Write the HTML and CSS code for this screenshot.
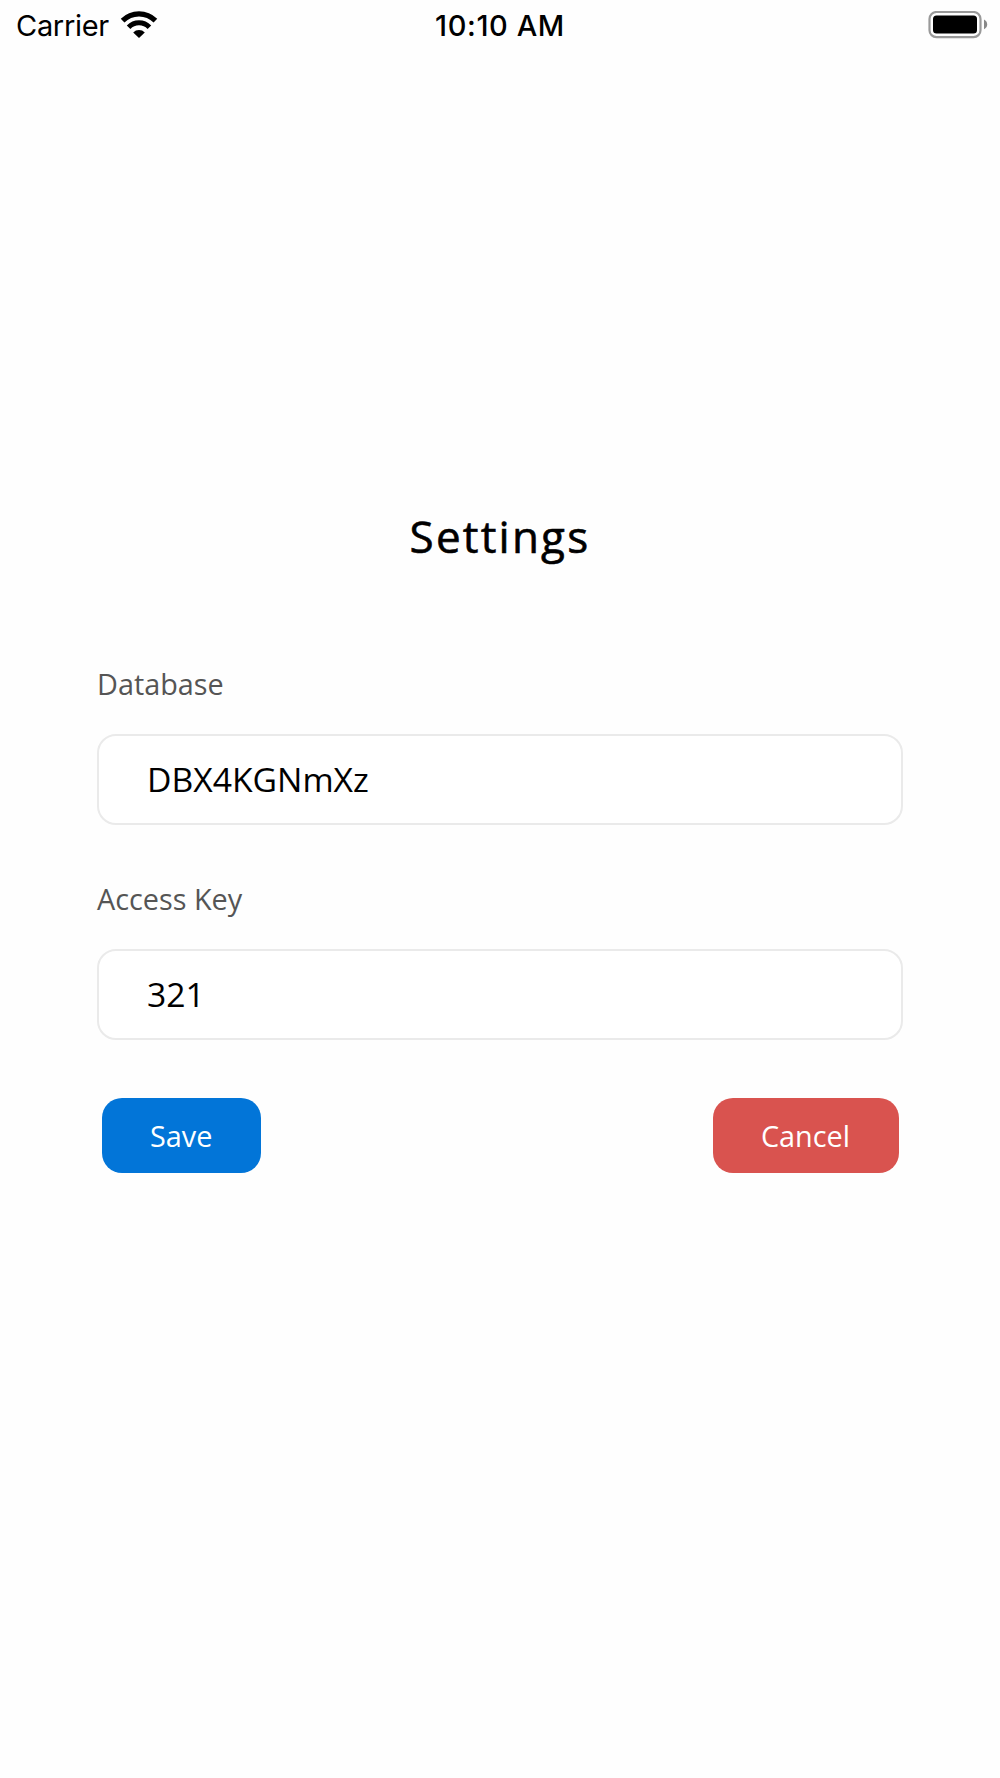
FILE: index.html
```
<!DOCTYPE html>
<html lang="en">
<head>
  <meta charset="UTF-8">
  <title>Settings</title>
  <meta name="viewport" content="width=device-width, initial-scale=1.0">
  <link rel="stylesheet" href="styles.css">
</head>
<body>

  <!-- Status bar -->
  <header class="status-bar">
    <div class="status-left">
      <span class="carrier">Carrier</span>
      <svg class="wifi" viewBox="0 0 38 28" width="38" height="28">
        <path d="M2.6 9.7 A23.2 23.2 0 0 1 35.4 9.7" fill="none" stroke="#000" stroke-width="5.2"/>
        <path d="M8.6 16.2 A14.4 14.4 0 0 1 29.4 16.2" fill="none" stroke="#000" stroke-width="5"/>
        <path d="M13.2 21.4 A8.2 8.2 0 0 1 24.8 21.4 L19 27 Z" fill="#000"/>
      </svg>
    </div>
    <div class="status-time">10:10 AM</div>
    <div class="status-right">
      <svg class="battery" viewBox="0 0 60 28" width="60" height="28">
        <rect x="1.5" y="1" width="51" height="25.2" rx="7" fill="none" stroke="#999" stroke-width="2.2"/>
        <rect x="5" y="4.6" width="44" height="18" rx="3.5" fill="#000"/>
        <path d="M56 8.6 Q59.2 10.4 59.2 13.4 Q59.2 16.4 56 18.2 Z" fill="#888"/>
      </svg>
    </div>
  </header>

  <!-- Settings form -->
  <form class="settings">
    <h1>Settings</h1>

    <label for="database">Database</label>
    <input type="text" id="database" value="DBX4KGNmXz">

    <label for="accessKey">Access Key</label>
    <input type="text" id="accessKey" value="321">

    <div class="buttons">
      <button type="button" class="btn save-btn">Save</button>
      <button type="button" class="btn cancel-btn">Cancel</button>
    </div>
  </form>

</body>
</html>
```
FILE: styles.css
```
* {
  box-sizing: border-box;
}

body {
  margin: 0;
  background: #fefefe;
  color: #000;
  font-family: "Open Sans", "Noto Sans", sans-serif;
}

/* Status bar */
.status-bar {
  display: grid;
  grid-template-columns: 1fr auto 1fr;
  align-items: center;
  height: 50px;
  padding: 0 12px 0 16px;
  font-family: Inter, "Liberation Sans", sans-serif;
  font-size: 29px;
}

.status-left {
  display: flex;
  align-items: center;
  gap: 11px;
}

.carrier {
  letter-spacing: -0.3px;
}

.status-time {
  margin-right: 4px;
  font-weight: 500;
  letter-spacing: 0.6px;
}

.status-right {
  display: flex;
  justify-content: flex-end;
}

.wifi,
.battery {
  display: block;
}

/* Form */
.settings {
  display: flex;
  flex-direction: column;
  padding: 456px 97px 0;
}

h1 {
  margin: 0 0 44px;
  font-size: 44px;
  font-weight: 400;
  line-height: 60px;
  letter-spacing: 2.2px;
  text-align: center;
  -webkit-text-stroke: 0.6px #000;
}

label {
  margin: 54px 0 30px;
  color: #555;
  font-size: 28.8px;
  line-height: 40px;
}

input {
  width: 100%;
  height: 91px;
  padding: 0 48px 2px 48px;
  border: 2px solid #eaeaea;
  border-radius: 19px;
  background: #fff;
  color: #000;
  font-family: inherit;
  font-size: 33.7px;
}

/* Save / Cancel */
.buttons {
  display: flex;
  justify-content: space-between;
  margin-top: 58px;
  padding: 0 4.5px;
}

.btn {
  height: 75px;
  padding: 0;
  border: none;
  border-radius: 20px;
  color: #fff;
  font-family: inherit;
  font-size: 28.8px;
  font-weight: 400;
}

.save-btn {
  width: 159.5px;
  background: #0275d8;
}

.cancel-btn {
  width: 186px;
  background: #d9534f;
}
```
